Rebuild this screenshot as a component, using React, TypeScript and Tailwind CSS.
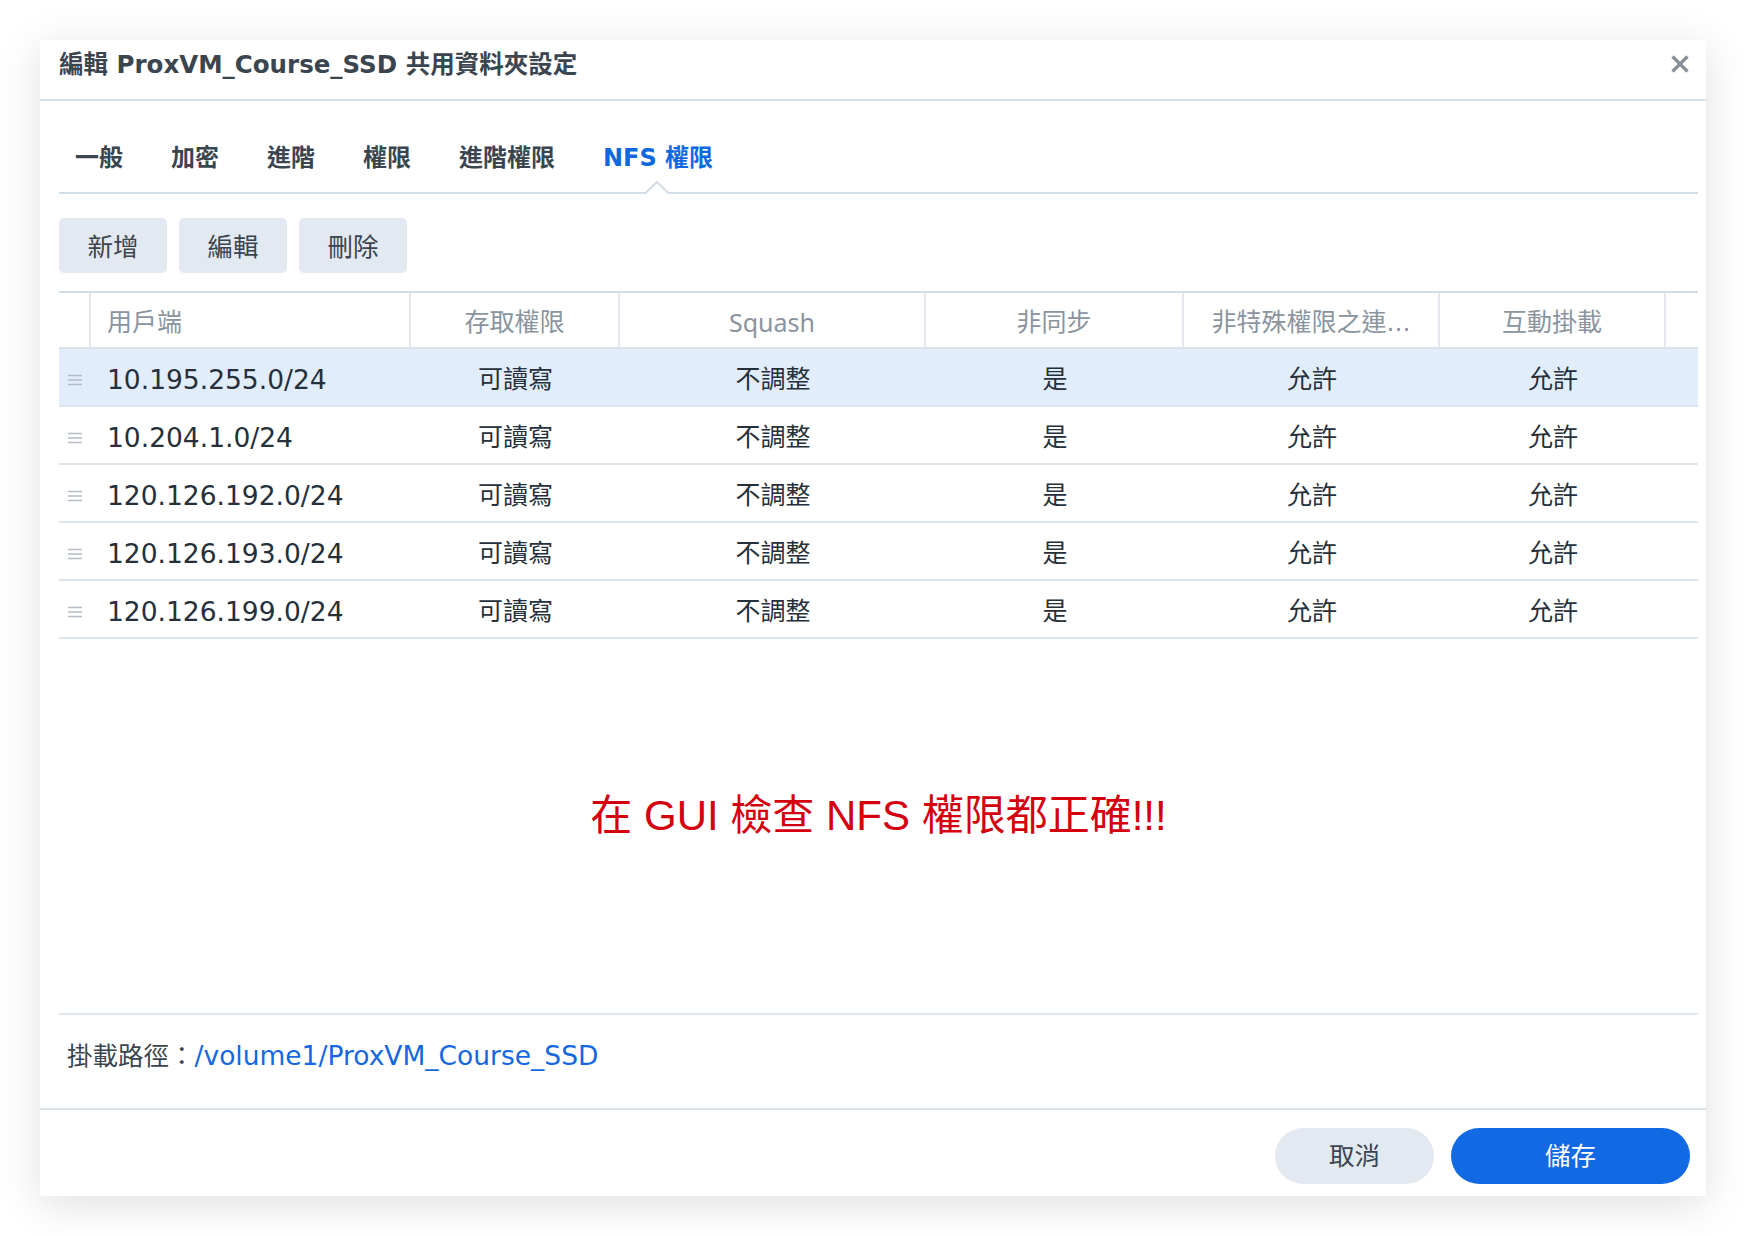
import React from 'react';

const FONT = "font-['DejaVu_Sans','Noto_Sans_CJK_TC',sans-serif]";

const tabs = ['一般', '加密', '進階', '權限', '進階權限', 'NFS 權限'];

const columns = [
  { label: '用戶端', width: 'w-[320px]', align: 'justify-start pl-[16px]' },
  { label: '存取權限', width: 'w-[209px]', align: 'justify-center' },
  { label: 'Squash', width: 'w-[306px]', align: 'justify-center' },
  { label: '非同步', width: 'w-[258px]', align: 'justify-center' },
  { label: '非特殊權限之連...', width: 'w-[256px]', align: 'justify-center' },
  { label: '互動掛載', width: 'w-[226px]', align: 'justify-center' },
];

const rules = [
  '10.195.255.0/24',
  '10.204.1.0/24',
  '120.126.192.0/24',
  '120.126.193.0/24',
  '120.126.199.0/24',
];

function Handle() {
  return (
    <svg width="16" height="14" viewBox="0 0 16 14" className="text-[#b3bcc6]">
      <path d="M1 2.5h14M1 7h14M1 11.5h14" stroke="currentColor" strokeWidth="1.6" />
    </svg>
  );
}

export default function App() {
  return (
    <div className={`w-[1746px] h-[1236px] bg-white pt-[40px] pl-[40px] ${FONT}`}>
      <div className="w-[1666px] h-[1156px] bg-white flex flex-col shadow-[0_8px_40px_rgba(0,0,0,0.13)]">
        {/* title bar */}
        <div className="h-[61px] shrink-0 flex items-start justify-between pl-[19px] pr-[16px] pt-[8px] border-b-2 border-[#d8e1e9]">
          <h1 className="text-[24.5px] leading-[34px] font-bold text-[#3b4550]">
            編輯 ProxVM_Course_SSD 共用資料夾設定
          </h1>
          <svg width="20" height="20" viewBox="0 0 20 20" className="mt-[6px] text-[#8a9199]">
            <path d="M2.5 2.5l15 15M17.5 2.5l-15 15" stroke="currentColor" strokeWidth="3.4" />
          </svg>
        </div>

        <div className="flex-1 flex flex-col pl-[19px] pr-[8px]">
          {/* tabs */}
          <div className="h-[93px] shrink-0 flex items-end border-b-2 border-[#d3dde6] relative">
            <div className="flex gap-[48px] pl-[16px] h-full items-center pt-[22px]">
              {tabs.map((t, i) => (
                <span
                  key={t}
                  className={`text-[24px] font-bold ${i === tabs.length - 1 ? 'text-[#0f68e0]' : 'text-[#3b4550]'}`}
                >
                  {t}
                </span>
              ))}
            </div>
            <svg
              width="26"
              height="14"
              viewBox="0 0 26 14"
              className="absolute left-[585px] bottom-[-2px]"
            >
              <path d="M0 13h1L13 2l12 11h1V14H0z" fill="white" />
              <path d="M0 13h1.5L13 2l11.5 11H26" fill="none" stroke="#d3dde6" strokeWidth="2" />
            </svg>
          </div>

          {/* toolbar */}
          <div className="flex gap-[12px] mt-[24px]">
            {['新增', '編輯', '刪除'].map((b) => (
              <button
                key={b}
                className="w-[108px] h-[55px] rounded-[5px] bg-[#e3e9f0] text-[25.5px] text-[#3b4550] pt-[3px]"
              >
                {b}
              </button>
            ))}
          </div>

          {/* table */}
          <div className="mt-[18px] border-t-2 border-[#d3dde6]">
            <div className="flex h-[56px] border-b-2 border-[#dbe3ea] text-[25px] text-[#8a949e]">
              <div className="w-[32px] border-r-2 border-[#e3e9ef]" />
              {columns.map((c) => (
                <div
                  key={c.label}
                  className={`${c.width} flex items-center ${c.align} border-r-2 border-[#e3e9ef] pt-[5px] whitespace-nowrap ${c.label === 'Squash' ? 'font-[Noto_Sans]' : ''}`}
                >
                  {c.label}
                </div>
              ))}
            </div>
            {rules.map((r, i) => (
              <div
                key={r}
                className={`flex h-[58px] border-b-2 border-[#dde5ec] text-[25px] text-[#25303b] pt-[6px] ${i === 0 ? 'bg-[#e2edfb]' : 'bg-white'}`}
              >
                <div className="w-[32px] flex items-center justify-center">
                  <Handle />
                </div>
                <div className="w-[320px] flex items-center pl-[16px] text-[26.5px]">{r}</div>
                <div className="w-[209px] flex items-center justify-center">可讀寫</div>
                <div className="w-[306px] flex items-center justify-center">不調整</div>
                <div className="w-[258px] flex items-center justify-center">是</div>
                <div className="w-[256px] flex items-center justify-center">允許</div>
                <div className="w-[226px] flex items-center justify-center">允許</div>
              </div>
            ))}
          </div>

          {/* note */}
          <div className="flex-1 flex items-center justify-center pb-[22px]">
            <p className="text-[42px] text-[#d4000f] font-['Liberation_Sans','Noto_Sans_CJK_TC',sans-serif]">
              在 GUI 檢查 NFS 權限都正確!!!
            </p>
          </div>

          {/* mount path */}
          <div className="h-[95px] shrink-0 border-t-2 border-[#dfe6ed] flex items-start pt-[24px] pl-[8px] leading-[34px]">
            <span className="text-[#3b4550] text-[25.5px]">掛載路徑：</span>
            <span className="text-[#1568e0] text-[26.5px]">/volume1/ProxVM_Course_SSD</span>
          </div>
        </div>

        {/* footer */}
        <div className="h-[88px] shrink-0 border-t-2 border-[#dbe3ea] flex justify-end items-start pt-[18px] pr-[16px] gap-[17px]">
          <button className="w-[159px] h-[56px] rounded-full bg-[#e3e9f0] text-[25.5px] text-[#3b4550]">
            取消
          </button>
          <button className="w-[239px] h-[56px] rounded-full bg-[#1169e4] text-[25.5px] text-white">
            儲存
          </button>
        </div>
      </div>
    </div>
  );
}
